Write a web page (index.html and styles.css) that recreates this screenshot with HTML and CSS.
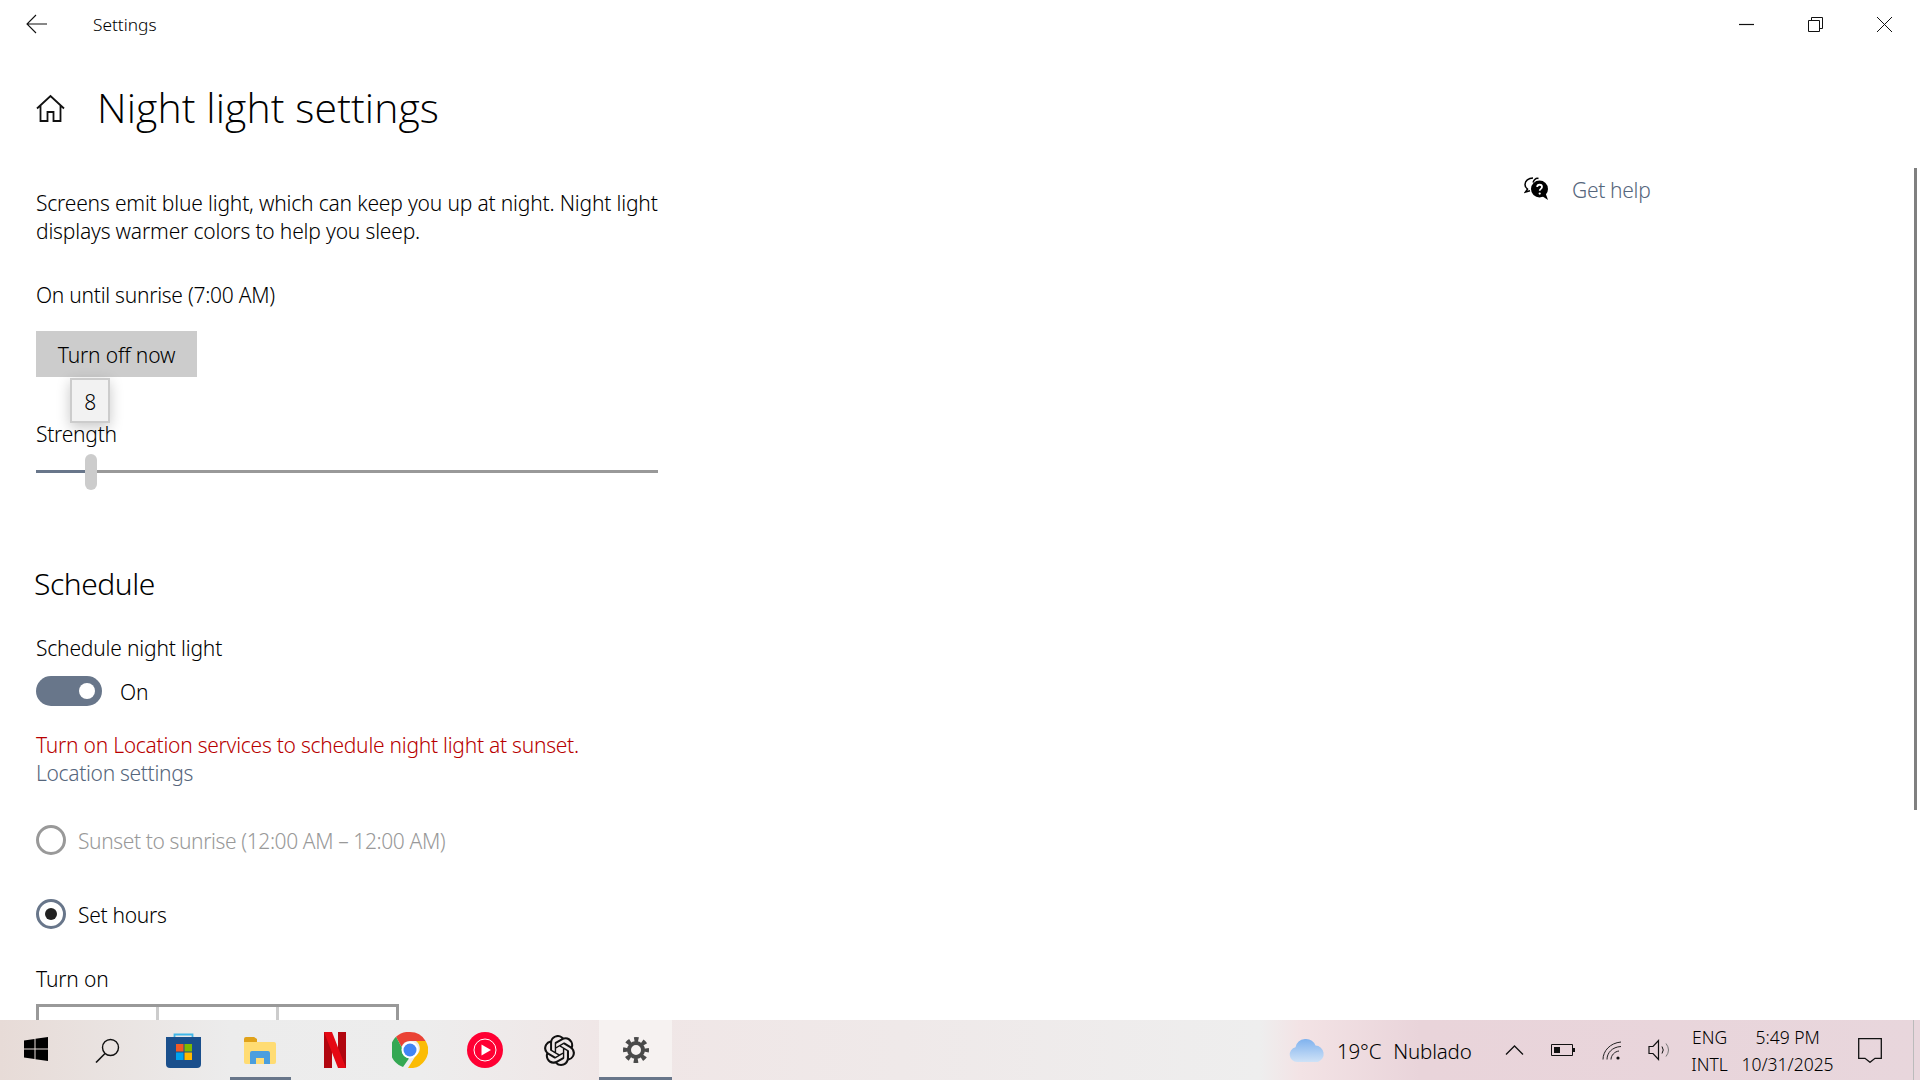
FILE: index.html
```html
<!DOCTYPE html>
<html lang="en">
<head>
  <meta charset="UTF-8">
  <title>Settings</title>
  <link rel="stylesheet" href="styles.css">
</head>
<body>
  <div class="window">
    <header class="titlebar">
      <svg class="back" width="22" height="20" viewBox="0 0 22 20"><path d="M10 1 1 10l9 9M1 10h20" fill="none" stroke="#111" stroke-width="1.1"/></svg>
      <span class="app-name">Settings</span>
      <div class="win-controls">
        <svg width="15" height="15" viewBox="0 0 15 15"><path d="M0 7.5h15" stroke="#111" stroke-width="1.2"/></svg>
        <svg width="15" height="15" viewBox="0 0 15 15"><path d="M.5 3.5h11v11H.5zM3.5 3.5v-3h11v11h-3" fill="none" stroke="#111"/></svg>
        <svg width="15" height="15" viewBox="0 0 15 15"><path d="M0 0l15 15M15 0 0 15" stroke="#111"/></svg>
      </div>
    </header>

    <div class="page">
      <main class="content">
        <div class="page-title">
          <svg class="home" width="29" height="29" viewBox="0 0 29 29"><path d="M1 14.500 14.500 2 28 14.500M4.500 11.500V27h7v-9h6v9h7V11.500" fill="none" stroke="#111" stroke-width="1.800"/></svg>
          <h1>Night light settings</h1>
        </div>

        <p class="desc">Screens emit blue light, which can keep you up at night. Night light displays warmer colors to help you sleep.</p>
        <p class="status">On until sunrise (7:00 AM)</p>
        <button class="btn">Turn off now</button>

        <div class="strength">
          <div class="tip">8</div>
          <label>Strength</label>
        </div>
        <div class="slider">
          <div class="slider-fill"></div>
          <div class="slider-thumb"></div>
          <div class="slider-rest"></div>
        </div>

        <h2>Schedule</h2>
        <p class="sched-label">Schedule night light</p>
        <div class="toggle-row">
          <span class="toggle"><span class="knob"></span></span>
          <span class="row-text">On</span>
        </div>
        <p class="warn">Turn on Location services to schedule night light at sunset.</p>
        <a class="link">Location settings</a>

        <div class="radio-row disabled first">
          <span class="radio"></span>
          <span class="row-text">Sunset to sunrise (12:00 AM – 12:00 AM)</span>
        </div>
        <div class="radio-row second">
          <span class="radio checked"></span>
          <span class="row-text">Set hours</span>
        </div>

        <p class="turn-on">Turn on</p>
        <div class="time-picker">
          <div></div>
          <div></div>
          <div></div>
        </div>
      </main>

      <aside class="help">
        <svg width="25" height="24" viewBox="0 0 25 24">
          <path d="M9 1C4.500 1 1 4 1 7.500c0 2 1 3.500 2.500 4.700L1.500 15l4.500-1.200" fill="none" stroke="#000" stroke-width="1.500"/>
          <path d="M9 5.500C10.500 2 13 1 14.500 1.500" fill="none" stroke="#000" stroke-width="1.500"/>
          <circle cx="15.500" cy="12" r="8.500" fill="#000"/>
          <path d="M18 19l6 4-2.500-7z" fill="#000"/>
          <path d="M13.200 10c0-3 4.800-3 4.800 0 0 2-2.300 1.800-2.300 3.800" fill="none" stroke="#fff" stroke-width="1.800"/>
          <circle cx="15.700" cy="16.600" r="1.100" fill="#fff"/>
        </svg>
        <a class="link help-link">Get help</a>
      </aside>
    </div>

    <div class="scrollbar"></div>
  </div>

  <footer class="taskbar">
    <div class="task-item start">
      <svg width="24" height="24" viewBox="0 0 24 24"><path d="M0 3.600 10.500 2v9.500H0zM11.500 1.800 24 0v11.500H11.500zM0 12.500h10.500V22L0 20.400zM11.500 12.500H24V24l-12.500-1.800z" fill="#000"/></svg>
    </div>
    <div class="task-item nudge-search">
      <svg width="25" height="25" viewBox="0 0 25 25"><circle cx="15.500" cy="9.500" r="8" fill="none" stroke="#111" stroke-width="1.400"/><path d="M10 15.500 1 24.500" stroke="#111" stroke-width="1.600"/></svg>
    </div>
    <div class="task-item nudge-store">
      <svg width="35" height="36" viewBox="0 0 35 36">
        <path d="M8.500 6V2.500h18V6" fill="none" stroke="#3fb6e8" stroke-width="1.800"/>
        <path d="M0 5h35v27a4 4 0 0 1-4 4H4a4 4 0 0 1-4-4z" fill="#1a4f8c"/>
        <rect x="10" y="12" width="7.500" height="7.500" fill="#f25a25"/>
        <rect x="18.500" y="12" width="7.500" height="7.500" fill="#7fba00"/>
        <rect x="10" y="20.500" width="7.500" height="7.500" fill="#00a4ef"/>
        <rect x="18.500" y="20.500" width="7.500" height="7.500" fill="#ffb900"/>
      </svg>
    </div>
    <div class="task-item underlined">
      <svg width="32" height="27" viewBox="0 0 32 27">
        <path d="M0 2a2 2 0 0 1 2-2h8l3 2 0 3H0z" fill="#e0a21a"/>
        <path d="M0 5h30a2 2 0 0 1 2 2v18a2 2 0 0 1-2 2H2a2 2 0 0 1-2-2z" fill="#ffdc73"/>
        <path d="M6 27V16a2 2 0 0 1 2-2h16a2 2 0 0 1 2 2v11h-6v-6h-8v6z" fill="#4a9ede"/>
      </svg>
    </div>
    <div class="task-item">
      <svg width="22" height="36" viewBox="0 0 22 36">
        <path d="M0 0h8v36l-8 0z" fill="#b1060f"/>
        <path d="M14 0h8v36h-8z" fill="#b1060f"/>
        <path d="M0 0h8l14 36h-8z" fill="#e50914"/>
      </svg>
    </div>
    <div class="task-item">
      <svg width="36" height="36" viewBox="0 0 36 36">
        <path d="M18 0a18 18 0 0 1 15.600 9H18a9 9 0 0 0-8.500 6L4 4.800A18 18 0 0 1 18 0z" fill="#ea4335"/>
        <path d="M4 4.800 10 16a9 9 0 0 0 7 10.500L11 35A18 18 0 0 1 4 4.800z" fill="#34a853"/>
        <path d="M33.600 9A18 18 0 0 1 16 36l7.500-12A9 9 0 0 0 24 9z" fill="#fbbc05"/>
        <circle cx="18" cy="18" r="8.500" fill="#fff"/>
        <circle cx="18" cy="18" r="6.500" fill="#4285f4"/>
      </svg>
    </div>
    <div class="task-item">
      <svg width="36" height="36" viewBox="0 0 36 36">
        <circle cx="18" cy="18" r="18" fill="#ff0033"/>
        <circle cx="18" cy="18" r="11" fill="none" stroke="#fff" stroke-width="1"/>
        <path d="M14.500 12.500v11l9.500-5.500z" fill="#fff"/>
      </svg>
    </div>
    <div class="task-item">
      <svg width="31" height="31" viewBox="0 0 24 24"><path fill="#111" d="M22.2819 9.8211a5.9847 5.9847 0 0 0-.5157-4.9108 6.0462 6.0462 0 0 0-6.5098-2.9A6.0651 6.0651 0 0 0 4.9807 4.1818a5.9847 5.9847 0 0 0-3.9977 2.9 6.0462 6.0462 0 0 0 .7427 7.0966 5.98 5.98 0 0 0 .511 4.9107 6.051 6.051 0 0 0 6.5146 2.9001A5.9847 5.9847 0 0 0 13.2599 24a6.0557 6.0557 0 0 0 5.7718-4.2058 5.9894 5.9894 0 0 0 3.9977-2.9001 6.0557 6.0557 0 0 0-.7475-7.0729zm-9.022 12.6081a4.4755 4.4755 0 0 1-2.8764-1.0408l.1419-.0804 4.7783-2.7582a.7948.7948 0 0 0 .3927-.6813v-6.7369l2.02 1.1686a.071.071 0 0 1 .038.052v5.5826a4.504 4.504 0 0 1-4.4945 4.4944zm-9.6607-4.1254a4.4708 4.4708 0 0 1-.5346-3.0137l.142.0852 4.783 2.7582a.7712.7712 0 0 0 .7806 0l5.8428-3.3685v2.3324a.0804.0804 0 0 1-.0332.0615L9.74 19.9502a4.4992 4.4992 0 0 1-6.1408-1.6464zM2.3408 7.8956a4.485 4.485 0 0 1 2.3655-1.9728V11.6a.7664.7664 0 0 0 .3879.6765l5.8144 3.3543-2.0201 1.1685a.0757.0757 0 0 1-.071 0l-4.8303-2.7865A4.504 4.504 0 0 1 2.3408 7.872zm16.5963 3.8558L13.1038 8.364 15.1192 7.2a.0757.0757 0 0 1 .071 0l4.8303 2.7913a4.4944 4.4944 0 0 1-.6765 8.1042v-5.6772a.79.79 0 0 0-.407-.667zm2.0107-3.0231l-.142-.0852-4.7735-2.7818a.7759.7759 0 0 0-.7854 0L9.409 9.2297V6.8974a.0662.0662 0 0 1 .0284-.0615l4.8303-2.7866a4.4992 4.4992 0 0 1 6.6802 4.66zM8.3065 12.863l-2.02-1.1638a.0804.0804 0 0 1-.038-.0567V6.0742a4.4992 4.4992 0 0 1 7.3757-3.4537l-.142.0805L8.704 5.459a.7948.7948 0 0 0-.3927.6813zm1.0976-2.3654l2.602-1.4998 2.6069 1.4998v2.9994l-2.5974 1.4997-2.6067-1.4997Z"/></svg>
    </div>
    <div class="task-item active underlined">
      <svg width="28" height="28" viewBox="0 0 28 28">
        <circle cx="14" cy="14" r="7" fill="none" stroke="#4a4a4a" stroke-width="4"/>
        <circle cx="14" cy="14" r="10.500" fill="none" stroke="#4a4a4a" stroke-width="5" stroke-dasharray="4.200 4.046" stroke-dashoffset="2.100"/>
      </svg>
    </div>

    <div class="tray">
      <svg class="cloud" width="37" height="24" viewBox="0 0 37 24">
        <defs>
          <linearGradient id="cloudFill" x1="0" y1="0" x2="0" y2="1">
            <stop offset="0" stop-color="#7fb2ee"/>
            <stop offset="1" stop-color="#cfe2f7"/>
          </linearGradient>
        </defs>
        <path d="M8 24a7.500 7.500 0 0 1-1.500-14.800A10.500 10.500 0 0 1 26.500 7.500 8.500 8.500 0 0 1 29 24z" fill="url(#cloudFill)"/>
      </svg>
      <span class="temp">19°C</span>
      <span class="weather">Nublado</span>
      <svg class="caret" width="19" height="10" viewBox="0 0 19 10"><path d="M1 9.500l8.500-8.500L18 9.500" fill="none" stroke="#111" stroke-width="1.300"/></svg>
      <svg class="battery" width="24" height="14" viewBox="0 0 24 14"><path d="M.5 1.500h21v11H.5z" fill="none" stroke="#111"/><rect x="3" y="4" width="6" height="6" fill="#111"/><rect x="22" y="5" width="2" height="4" fill="#111"/></svg>
      <svg class="wifi" width="20" height="19" viewBox="0 0 20 19">
        <path d="M1 18.500C1 10 8 2 19 1M5 18.500C5 12 10 6 19 5.500M9 18.500C9 14.500 12.500 10.500 17 10" fill="none" stroke="#222" stroke-width="1"/>
        <circle cx="16" cy="17" r="1.600" fill="#111"/>
      </svg>
      <svg class="speaker" width="24" height="22" viewBox="0 0 24 22">
        <path d="M1 7.500h4L10.500 1.500v19L5 14.500H1z" fill="none" stroke="#111" stroke-width="1.200"/>
        <path d="M14 7.500q2.500 3.500 0 7" fill="none" stroke="#111"/>
        <path d="M18 4.500q5 6.500 0 13" fill="none" stroke="#777"/>
      </svg>
      <div class="lang"><span>ENG</span><span>INTL</span></div>
      <div class="clock"><span>5:49 PM</span><span>10/31/2025</span></div>
      <svg class="notif" width="24" height="25" viewBox="0 0 24 25"><path d="M.7.700h22.600v19.600H17l-5 4-5-4H.7z" fill="none" stroke="#111" stroke-width="1.300"/></svg>
      <div class="show-desktop"></div>
    </div>
  </footer>
</body>
</html>
```

FILE: styles.css
```css
* { box-sizing: border-box; }
html, body { margin: 0; height: 100%; overflow: hidden; }
body { font-family: "Noto Sans", sans-serif; font-size: 21px; font-weight: 300; letter-spacing: -0.18px; color: #000; background: #fff; }
p, h1, h2 { margin: 0; font-weight: 300; }

.window { position: relative; height: 1020px; overflow: hidden; }

.titlebar { display: flex; align-items: center; height: 48px; padding-left: 26px; }
.app-name { margin-left: 45px; font-size: 17.3px; letter-spacing: 0; }
.win-controls { display: flex; gap: 54px; margin-left: auto; margin-right: 28px; }

.page { display: flex; padding-top: 30px; }
.content { width: 622px; margin-left: 36px; flex-shrink: 0; line-height: 28px; }
.help { display: flex; align-items: center; height: 28px; margin-left: 866px; margin-top: 97px; gap: 23px; }
.help-link { padding-top: 1px; letter-spacing: -0.25px; }

.page-title { display: flex; align-items: center; height: 60px; }
.home { flex-shrink: 0; }
h1 { margin-left: 32px; padding-bottom: 2px; font-family: "Open Sans", sans-serif; font-weight: 300; font-size: 41px; letter-spacing: 0.1px; line-height: 58px; color: #000; }

.desc { margin-top: 51px; }
.status { margin-top: 36px; letter-spacing: -0.27px; }
.btn { display: block; width: 161px; height: 46px; margin-top: 22px; border: 0; padding: 2px 0 0; background: #ccc; font: inherit; letter-spacing: inherit; color: #000; }

.strength { position: relative; margin-top: 43px; height: 28px; letter-spacing: -0.25px; }
.tip { position: absolute; left: 34px; top: -42px; width: 40px; height: 45px; padding-top: 2px; display: flex; align-items: center; justify-content: center; background: #f2f2f2; border: 2px solid #ccc; box-shadow: 0 4px 14px rgba(0,0,0,0.22); z-index: 2; }

.slider { display: flex; align-items: center; height: 36px; margin-top: 6px; }
.slider-fill { width: 49px; height: 3px; margin-bottom: 2px; background: #68768a; }
.slider-thumb { width: 12px; height: 36px; border-radius: 6px; background: #ccc; }
.slider-rest { flex: 1; height: 3px; margin-bottom: 2px; background: #999; }

h2 { margin-top: 74px; margin-left: -2px; font-size: 30px; line-height: 40px; letter-spacing: -0.45px; color: #000; }
.sched-label { margin-top: 30px; }

.toggle-row { display: flex; align-items: center; gap: 18px; height: 30px; margin-top: 14px; }
.toggle { position: relative; display: block; width: 66px; height: 30px; border-radius: 15px; background: #68768a; }
.knob { position: absolute; right: 7px; top: 7px; width: 16px; height: 16px; border-radius: 50%; background: #fff; }
.row-text { padding-top: 1px; }

.warn { margin-top: 25px; color: #b80000; white-space: nowrap; letter-spacing: -0.26px; }
.link { display: block; color: #56667c; letter-spacing: -0.32px; }

.radio-row { display: flex; align-items: center; gap: 12px; height: 30px; }
.first { margin-top: 38px; letter-spacing: -0.4px; }
.second { margin-top: 44px; letter-spacing: -0.3px; }
.radio { position: relative; display: block; width: 30px; height: 30px; border: 3px solid #68768a; border-radius: 50%; }
.radio.checked::after { content: ""; position: absolute; left: 6px; top: 6px; width: 12px; height: 12px; border-radius: 50%; background: #222; }
.disabled { color: #999; }
.disabled .radio { border-color: #999; }

.turn-on { margin-top: 36px; }
.time-picker { display: flex; width: 363px; height: 70px; margin-top: 11px; border: 3px solid #999; }
.time-picker div { flex: 1; border-left: 3px solid #ccc; }
.time-picker div:first-child { border-left: 0; }

.scrollbar { position: absolute; left: 1914px; top: 168px; width: 3px; height: 642px; background: #808080; }

.taskbar { display: flex; height: 60px; background: linear-gradient(90deg, #e7dbd7 0, #ececec 230px, #ededed 420px, #f0e6e6 620px, #efe9e9 900px, #eeeeee 1260px, #f3e3e5 1300px, #e9d4da 1420px, #e8d6dc 1920px); }
.task-item { position: relative; display: flex; align-items: center; justify-content: center; width: 75px; flex-shrink: 0; }
.task-item.start { width: 72px; padding-bottom: 2px; }
.nudge-search svg { margin-right: 5px; }
.nudge-store svg { margin-right: 2px; }
.task-item.active { width: 73px; margin-left: 2px; background: #f6f2f1; }
.underlined::after { content: ""; position: absolute; left: 8px; right: 6px; bottom: 0; height: 3px; background: #68768a; }
.active.underlined::after { left: 0; right: 0; }

.tray { display: flex; align-items: center; margin-left: 617px; flex: 1; font-size: 20.5px; }
.temp { margin-left: 11px; padding-top: 2px; }
.weather { margin-left: 12px; padding-top: 2px; }
.caret { margin-left: 33px; }
.battery { margin-left: 27px; }
.wifi { margin-left: 27px; }
.speaker { margin-left: 26px; }
.lang, .clock { display: flex; flex-direction: column; align-items: center; gap: 5px; font-size: 17.5px; line-height: 22px; letter-spacing: 0; }
.lang { width: 50px; margin-left: 13px; }
.clock { width: 96px; margin-left: 5px; }
.notif { margin-left: 22px; }
.show-desktop { width: 1px; height: 60px; margin-left: auto; margin-right: 6px; background: #bbb; }
```
